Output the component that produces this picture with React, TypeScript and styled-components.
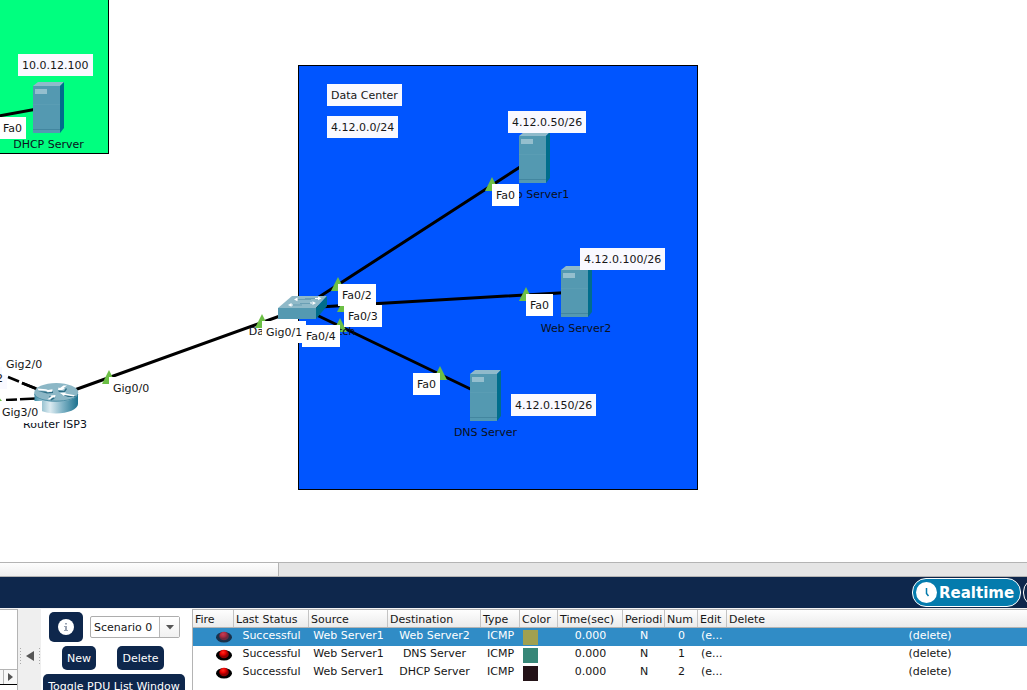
import React from 'react';
import styled, { createGlobalStyle, css } from 'styled-components';

const GlobalStyle = createGlobalStyle`
  * { box-sizing: border-box; }
  body {
    margin: 0;
    background: #fff;
    color: #161616;
    font: 11px/14px 'DejaVu Sans', sans-serif;
    overflow: hidden;
  }
`;

const NAVY = '#0e274c';

const Window = styled.div`
  display: flex;
  flex-direction: column;
  width: 1027px;
  height: 690px;
  overflow: hidden;
`;

/* ---------- workspace ---------- */

const Canvas = styled.main`
  position: relative;
  flex: 0 0 562px;
  overflow: hidden;
  background: #fff;
`;

const Region = styled.div<{ $x: number; $y: number; $w: number; $h: number; $fill: string }>`
  position: absolute;
  left: ${p => p.$x}px;
  top: ${p => p.$y}px;
  width: ${p => p.$w}px;
  height: ${p => p.$h}px;
  background: ${p => p.$fill};
  border: 1px solid #000;
`;

const Links = styled.svg`
  position: absolute;
  inset: 0;
`;

const Device = styled.div<{ $x: number; $y: number }>`
  position: absolute;
  left: ${p => p.$x}px;
  top: ${p => p.$y}px;
  svg { display: block; }
`;

const DeviceName = styled.span<{ $x: number; $y: number }>`
  position: absolute;
  left: ${p => p.$x}px;
  top: ${p => p.$y - 6}px;
  transform: translateX(-50%);
  white-space: nowrap;
  color: #0b1020;
`;

const Tag = styled.span<{ $x: number; $y: number; $w: number; $note?: boolean }>`
  position: absolute;
  left: ${p => p.$x}px;
  top: ${p => p.$y}px;
  width: ${p => p.$w}px;
  height: 22px;
  padding-left: 4px;
  line-height: 24px;
  white-space: nowrap;
  background: ${p => (p.$note ? '#f9f9ff' : '#fff')};
`;

const ServerIcon = () => (
  <svg width="31" height="51" viewBox="0 0 31 51">
    <path d="M0 4L5 0H31L27 4Z" fill="#8fbacb" />
    <path d="M27 4L31 0V46L27 51Z" fill="#006d8c" />
    <path d="M0 4H27V51H0Z" fill="#5499b1" />
    <path d="M2 7H14V12H2Z" fill="#94bfce" />
    <path d="M0 22.5H27" stroke="#5a9db4" />
    <path d="M0 47.5H27" stroke="#43869f" />
  </svg>
);

const SwitchIcon = () => (
  <svg width="50" height="24" viewBox="0 0 50 24">
    <path d="M0 12L14 0H49L38 12Z" fill="#8fb9c8" />
    <path d="M38 12L49 0V10L38 23Z" fill="#006d8b" />
    <path d="M0 12H38V23H0Z" fill="#5499b1" />
    <path d="M20 3.500H33M27 2.500H37M13 9H24M22 7.500H33" stroke="#6b9fb4" strokeWidth="1.200" fill="none" />
    <g fill="#fff">
      <path d="M16 3.500L19.500 1.500V5.300Z" />
      <path d="M43.500 2.300L40 .6V4.200ZM37 1.900H40V2.900H37Z" />
      <path d="M10 9L13.500 7V10.800ZM13 8.500H15V9.500H13Z" />
      <path d="M38 7L34.500 5.200V8.900ZM32 6.500H35V7.500H32Z" />
    </g>
  </svg>
);

const RouterIcon = () => (
  <svg width="45" height="31" viewBox="0 0 45 31">
    <defs>
      <linearGradient id="routerBody">
        <stop offset="0" stopColor="#3c8ea8" />
        <stop offset=".18" stopColor="#9cc5d3" />
        <stop offset=".36" stopColor="#dcebf1" />
        <stop offset=".65" stopColor="#7eb2c5" />
        <stop offset="1" stopColor="#1c718e" />
      </linearGradient>
    </defs>
    <path d="M.5 10V21C.5 26 10 30.500 22 30.500S44 26 44 21V10Z" fill="url(#routerBody)" />
    <ellipse cx="22.250" cy="9.500" rx="22" ry="9.500" fill="#8cb7c6" />
    <path d="M.5 11C3 20.500 41 20.500 44 11" fill="none" stroke="#3f86a0" strokeWidth=".8" />
    <g fill="#2d6e86">
      <path d="M4 8L11 8.500L14 9.500L19 8V10L13 10.500Z" />
      <path d="M24 7.500L30 8L32 5L33 6L31 9L25 9Z" />
      <path d="M27 11L34 14L42 14L41 12.500Z" />
      <path d="M15 13L20 15L22 13.500L20 16L17 17.500Z" />
    </g>
    <g fill="#fff">
      <path d="M3.500 5.500L12 6.300L14 7L18.500 6.300L18.300 8.800L12.500 9L13.500 8L4.500 7.300Z" />
      <path d="M24 7L24.500 4.500L26 5L29.500 2.500L33 2.600L29.500 5L31 5.700L28 7Z" />
      <path d="M26 10L32 9.600L31.200 10.600L41 12.300L40 13.600L30.500 12L30 13Z" />
      <path d="M16.500 12.500L21.500 12L21 14.500L19.500 14.100L16 16.500L13.500 16.200L17.500 13.200Z" />
    </g>
  </svg>
);

const lights: [number, number][] = [
  [492, 177], [526, 287], [440, 366], [338, 277], [344, 298],
  [340, 318], [262, 314], [109, 370], [-5, 108],
];

const servers = [
  { x: 33, y: 82, name: 'DHCP Server', nx: 48.5, ny: 144 },
  { x: 519, y: 132, name: 'Web Server1', nx: 534, ny: 194 },
  { x: 561, y: 266, name: 'Web Server2', nx: 576, ny: 328 },
  { x: 470, y: 370, name: 'DNS Server', nx: 485.5, ny: 432 },
];

const ports: [string, number, number, number][] = [
  ['Fa0', -1, 117, 27],
  ['Fa0', 492, 184, 27],
  ['Fa0', 526, 294, 27],
  ['Fa0', 413, 373, 27],
  ['Fa0/2', 338, 284, 38],
  ['Fa0/3', 344, 305, 38],
  ['Gig0/1', 262, 321, 44],
  ['Fa0/4', 302, 325, 38],
  ['Gig0/0', 109, 377, 44],
  ['Gig2/0', 2, 353, 44],
  ['Gig3/0', -2, 401, 44],
];

const notes: [string, number, number, number][] = [
  ['10.0.12.100', 18, 54, 74.5],
  ['Data Center', 327, 84, 74.5],
  ['4.12.0.0/24', 327, 116, 71],
  ['4.12.0.50/26', 508, 111, 78],
  ['4.12.0.100/26', 580, 248, 85],
  ['4.12.0.150/26', 511, 394, 85],
  ['2', -8, 367, 15],
];

const Topology = () => (
  <Canvas>
    <Region $x={-200} $y={-100} $w={309} $h={254} $fill="#00ff7f" />
    <Region $x={298} $y={65} $w={400} $h={425} $fill="#0055ff" />
    <Links width="1027" height="562">
      <g stroke="#000" strokeWidth="3">
        <path d="M-10 117.500L48 107" />
        <path d="M302 308L534 158M302 308L576 292M302 308L485 396M302 308L55 397" />
        <path d="M22 383L38 389.500" strokeWidth="2.500" />
        <path d="M6 400L17 399.500M20 399.300L36 398.500" strokeWidth="2.500" />
      </g>
    </Links>
    {servers.map(s => <Device key={s.name} $x={s.x} $y={s.y}><ServerIcon /></Device>)}
    <Device $x={278} $y={296}><SwitchIcon /></Device>
    <Device $x={33.5} $y={382.5}><RouterIcon /></Device>
    <Links width="1027" height="562">
      {lights.map(([x, y]) => (
        <path key={`${x}-${y}`} d={`M${x} ${y}l7 14h-14z`} fill="#6cbf45" />
      ))}
      <path d="M0 398.500L2 401H0Z" fill="#6cbf45" />
    </Links>
    {servers.map(s => <DeviceName key={s.name} $x={s.nx} $y={s.ny}>{s.name}</DeviceName>)}
    <DeviceName $x={302} $y={331}>Data Center Switch</DeviceName>
    <DeviceName $x={55} $y={424}>Router ISP3</DeviceName>
    {notes.map(([t, x, y, w]) => <Tag key={t} $note $x={x} $y={y} $w={w}>{t}</Tag>)}
    {ports.map(([t, x, y, w]) => <Tag key={`${t}${x}`} $x={x} $y={y} $w={w}>{t}</Tag>)}
    <Links width="1027" height="562">
      <path d="M8 377L19 381.500M22 383L36 388.500" stroke="#000" strokeWidth="2.500" />
    </Links>
  </Canvas>
);

/* ---------- scrollbar and mode bar ---------- */

const ScrollTrack = styled.div`
  flex: 0 0 15px;
  background: #e5e5e5;
  border: solid #b4b4b4;
  border-width: 1px 0;
`;

const ScrollThumb = styled.div`
  width: 279px;
  height: 100%;
  background: linear-gradient(#fdfdfd, #efefef);
  border-right: 1px solid #b4b4b4;
`;

const ModeBar = styled.div`
  display: flex;
  justify-content: flex-end;
  gap: 2px;
  flex: 0 0 31px;
  padding-top: 1px;
  background: ${NAVY};
  overflow: hidden;
`;

const ModeButton = styled.button<{ $active?: boolean }>`
  display: flex;
  align-items: center;
  flex: none;
  width: ${p => (p.$active ? 109 : 110)}px;
  height: 29px;
  margin: 0 ${p => (p.$active ? 0 : -106)}px 0 0;
  padding: 0 0 0 3px;
  gap: 2px;
  border: 1px solid #fff;
  border-radius: 14px;
  background: ${p => (p.$active ? '#047bad' : NAVY)};
  color: #fff;
  font: bold 15px/18px 'DejaVu Sans', sans-serif;
`;

/* ---------- bottom panels ---------- */

const Bottom = styled.div`
  display: flex;
  flex: 1;
  min-height: 0;
  border-top: 1px solid #f4f4f4;
`;

const DeviceList = styled.div`
  display: flex;
  flex-direction: column;
  justify-content: flex-end;
  width: 18px;
  border: solid #b4b4b4;
  border-width: 1px 1px 0 0;
`;

const ListScroll = styled.div`
  display: flex;
  height: 15px;
  border-top: 1px solid #b4b4b4;
  background: #f8f8f8;
`;

const ListScrollButton = styled.div`
  display: flex;
  align-items: center;
  justify-content: center;
  width: 14px;
  margin-left: 3px;
  padding-bottom: 1px;
  border-left: 1px solid #b4b4b4;
`;

const ListFooter = styled.div`
  height: 6px;
  border-top: 1px solid #000;
  background: #fff;
`;

const Splitter = styled.div`
  display: flex;
  align-items: center;
  justify-content: space-between;
  width: 23px;
  padding: 13px 1px 0 2px;
  background: #efefef;
`;

const Grip = styled.i`
  width: 1px;
  height: 17px;
  background: repeating-linear-gradient(#aaa 0 1px, transparent 1px 3px);
`;

const Scenario = styled.div`
  display: flex;
  flex-direction: column;
  width: 151px;
  padding: 3px 0 0 2px;
`;

const ScenarioRow = styled.div<{ $gap: number; $indent: number; $top?: number }>`
  display: flex;
  align-items: center;
  gap: ${p => p.$gap}px;
  padding-left: ${p => p.$indent}px;
  margin-top: ${p => p.$top ?? 0}px;
`;

const NavyButton = styled.button<{ $w: number; $h: number }>`
  display: flex;
  align-items: center;
  justify-content: center;
  flex: none;
  width: ${p => p.$w}px;
  height: ${p => p.$h}px;
  padding: ${p => (p.$h === 24 ? 2 : 0)}px 0 0;
  border: 0;
  border-radius: 5px;
  background: ${NAVY};
  color: #fff;
  font: 11px/14px 'DejaVu Sans', sans-serif;
  white-space: nowrap;
`;

const Combo = styled.div`
  display: flex;
  width: 90px;
  height: 22px;
  border: 1px solid #adadad;
  border-radius: 2px;
  line-height: 22px;
`;

const ComboText = styled.span`
  flex: 1;
  padding-left: 3px;
`;

const ComboArrow = styled.span`
  display: flex;
  align-items: center;
  justify-content: center;
  width: 20px;
  border-left: 1px solid #b8b8b8;
  background: linear-gradient(#fff, #f1f1f1);
`;

const columns = css`
  display: grid;
  grid-template-columns: 41px 75px 79px 93px 39px 38px 65px 42px 33px 29px 406px;
`;

const Table = styled.div`
  flex: 1;
  min-width: 0;
  overflow: hidden;
  border: solid #b4b4b4;
  border-width: 1px 0 0 1px;
`;

const HeaderRow = styled.div`
  ${columns}
  height: 18px;
  border-bottom: 1px solid #b4b4b4;
  background: linear-gradient(#fefefe, #ebebeb);
`;

const HeaderCell = styled.div`
  height: 17px;
  padding-left: 2px;
  line-height: 20px;
  overflow: hidden;
  white-space: nowrap;
  border-right: 1px solid #c4c4c4;
  &:last-child { border-right: 0; }
`;

const Row = styled.div<{ $selected?: boolean }>`
  ${columns}
  height: 18px;
  background: ${p => (p.$selected ? '#308cc6' : '#fff')};
  color: ${p => (p.$selected ? '#fff' : '#161616')};
`;

const Cell = styled.div<{ $start?: boolean }>`
  display: flex;
  justify-content: ${p => (p.$start ? 'flex-start' : 'center')};
  padding-left: ${p => (p.$start ? 3 : 0)}px;
  line-height: 16px;
  white-space: nowrap;
`;

const FireCell = styled.div`
  padding: 3px 0 0 23px;
  svg { display: block; }
`;

const Swatch = styled.div<{ $color: string }>`
  width: 15px;
  height: 15px;
  margin: 2px 0 0 3px;
  background: ${p => p.$color};
`;

const FireIcon = ({ selected }: { selected?: boolean }) => (
  <svg width="16" height="12" viewBox="0 0 16 12">
    <defs>
      <radialGradient id={selected ? 'fireSel' : 'fire'} cx=".4" cy=".3">
        <stop offset="0" stopColor={selected ? '#c04058' : '#ff3020'} />
        <stop offset=".6" stopColor={selected ? '#ad2a40' : '#e60000'} />
        <stop offset="1" stopColor={selected ? '#70283d' : '#900000'} />
      </radialGradient>
    </defs>
    <ellipse cx="8" cy="6.300" rx="8" ry="5.300" fill={selected ? '#18304a' : '#000'} />
    <ellipse cx="8" cy="5" rx="4.800" ry="4.300" fill={`url(#${selected ? 'fireSel' : 'fire'})`} />
  </svg>
);

const headers = ['Fire', 'Last Status', 'Source', 'Destination', 'Type', 'Color', 'Time(sec)', 'Periodi', 'Num', 'Edit', 'Delete'];
const pdus = [
  { to: 'Web Server2', color: '#a0a050' },
  { to: 'DNS Server', color: '#378778' },
  { to: 'DHCP Server', color: '#241318' },
];

export default function App() {
  return (
    <Window>
      <GlobalStyle />
      <Topology />
      <ScrollTrack><ScrollThumb /></ScrollTrack>
      <ModeBar>
        <ModeButton $active>
          <svg width="21" height="21" viewBox="0 0 21 21">
            <circle cx="10.500" cy="10.500" r="10.500" fill="#fff" />
            <path d="M10.500 6V11.500L12.500 14" fill="none" stroke="#047bad" strokeWidth="1.500" />
          </svg>
          Realtime
        </ModeButton>
        <ModeButton />
      </ModeBar>
      <Bottom>
        <DeviceList>
          <ListScroll>
            <ListScrollButton>
              <svg width="5" height="8"><path d="M0 0L5 4L0 8Z" fill="#555" /></svg>
            </ListScrollButton>
          </ListScroll>
          <ListFooter />
        </DeviceList>
        <Splitter>
          <Grip />
          <svg width="8" height="10"><path d="M8 0V10L0 5Z" fill="#555" /></svg>
          <Grip />
        </Splitter>
        <Scenario>
          <ScenarioRow $gap={7} $indent={6}>
            <NavyButton $w={34} $h={30} aria-label="Info">
              <svg width="16" height="16" viewBox="0 0 16 16">
                <circle cx="8" cy="8" r="8" fill="#fff" />
                <path d="M7 4H9V5.500H7ZM7 7H9V11H10V12H6V11H7V8H6V7Z" fill="#9aa3b2" />
              </svg>
            </NavyButton>
            <Combo>
              <ComboText>Scenario 0</ComboText>
              <ComboArrow><svg width="8" height="5"><path d="M0 0H8L4 4.500Z" fill="#555" /></svg></ComboArrow>
            </Combo>
          </ScenarioRow>
          <ScenarioRow $gap={21} $indent={19} $top={4}>
            <NavyButton $w={34} $h={24}>New</NavyButton>
            <NavyButton $w={47} $h={24}>Delete</NavyButton>
          </ScenarioRow>
          <ScenarioRow $gap={0} $indent={0} $top={4}>
            <NavyButton $w={142} $h={24}>Toggle PDU List Window</NavyButton>
          </ScenarioRow>
        </Scenario>
        <Table>
          <HeaderRow>{headers.map(h => <HeaderCell key={h}>{h}</HeaderCell>)}</HeaderRow>
          {pdus.map((p, i) => (
            <Row key={p.to} $selected={i === 0}>
              <FireCell><FireIcon selected={i === 0} /></FireCell>
              <Cell>Successful</Cell>
              <Cell>Web Server1</Cell>
              <Cell>{p.to}</Cell>
              <Cell>ICMP</Cell>
              <Swatch $color={p.color} />
              <Cell>0.000</Cell>
              <Cell>N</Cell>
              <Cell>{i}</Cell>
              <Cell $start>(e...</Cell>
              <Cell>(delete)</Cell>
            </Row>
          ))}
        </Table>
      </Bottom>
    </Window>
  );
}
